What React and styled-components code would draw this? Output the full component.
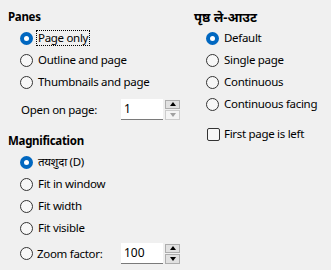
import React from 'react'
import styled, { createGlobalStyle } from 'styled-components'

const GlobalStyle = createGlobalStyle`
  body {
    margin: 0;
    background: #f0f0f0;
    font-family: "Noto Sans", "Noto Sans Devanagari", sans-serif;
    font-size: 11.5px;
    letter-spacing: -0.3px;
    color: #000;
  }
`

const Page = styled.div`
  display: grid;
  grid-template-columns: 186px 1fr;
  padding: 8px 0 0 8px;
  width: 331px;
  height: 270px;
  box-sizing: border-box;
`

const Column = styled.div`
  display: flex;
  flex-direction: column;
`

const Heading = styled.div`
  font-weight: bold;
  height: 18px;
  line-height: 18px;
  margin-bottom: 1px;
  margin-top: ${p => p.$top || 0}px;
  font-size: ${p => (p.$deva ? '13px' : 'inherit')};
  letter-spacing: ${p => (p.$deva ? '0' : 'inherit')};
`

const Row = styled.label`
  display: flex;
  align-items: center;
  height: 22px;
  padding-left: ${p => p.$indent || 12}px;
  margin-top: ${p => p.$top || 0}px;
  white-space: nowrap;
`

const Radio = styled.span`
  width: 13px;
  height: 13px;
  box-sizing: border-box;
  border-radius: 50%;
  flex-shrink: 0;
  margin-right: 4px;
  border: ${p => (p.$checked ? '0' : '1px solid #333')};
  background: ${p => (p.$checked ? '#0067c0' : '#f7f7f7')};
  display: flex;
  align-items: center;
  justify-content: center;
  &::after {
    content: '';
    display: ${p => (p.$checked ? 'block' : 'none')};
    width: 5px;
    height: 5px;
    border-radius: 50%;
    background: #fff;
  }
`

const Check = styled.span`
  width: 13px;
  height: 13px;
  box-sizing: border-box;
  border: 1px solid #333;
  border-radius: 2px;
  background: #f7f7f7;
  margin-left: 1px;
  margin-right: 3px;
  flex-shrink: 0;
`

const Text = styled.span`
  padding: 0 1px;
  line-height: 14px;
  border: 1px dotted ${p => (p.$focus ? '#000' : 'transparent')};
  margin-left: -1px;
`

const FieldLabel = styled.span`
  width: ${p => p.$width}px;
  flex-shrink: 0;
`

const Spin = styled.div`
  display: flex;
  align-items: stretch;
  height: 21px;
`

const SpinInput = styled.div`
  width: 42px;
  background: #fff;
  border-bottom: 1px solid #7a7a7a;
  box-sizing: border-box;
  padding-left: 3px;
  line-height: 20px;
  font-size: 12px;
  letter-spacing: 0;
`

const SpinButtons = styled.div`
  display: flex;
  flex-direction: column;
  gap: 1px;
  margin-left: 2px;
  width: 15px;
  padding-top: 1px;
`

const SpinButton = styled.div`
  flex: 1;
  border: 1px solid ${p => (p.$disabled ? '#cccccc' : '#adadad')};
  background: ${p => (p.$disabled ? '#f4f4f4' : '#e1e1e1')};
  display: flex;
  align-items: center;
  justify-content: center;
  &::after {
    content: '';
    width: 0;
    height: 0;
    border-left: 3.5px solid transparent;
    border-right: 3.5px solid transparent;
    ${p =>
      p.$down
        ? `border-top: 4px solid ${p.$disabled ? '#a0a0a0' : '#000'};`
        : `border-bottom: 4px solid ${p.$disabled ? '#a0a0a0' : '#000'};`}
  }
`

function SpinField ({ value, downDisabled }) {
  return (
    <Spin>
      <SpinInput>{value}</SpinInput>
      <SpinButtons>
        <SpinButton />
        <SpinButton $down $disabled={downDisabled} />
      </SpinButtons>
    </Spin>
  )
}

function RadioRow ({ label, checked, focus, top }) {
  return (
    <Row $top={top}>
      <Radio $checked={checked} />
      <Text $focus={focus}>{label}</Text>
    </Row>
  )
}

export default function App () {
  return (
    <>
      <GlobalStyle />
      <Page>
        <Column>
          <Heading>Panes</Heading>
          <RadioRow label='Page only' checked focus />
          <RadioRow label='Outline and page' />
          <RadioRow label='Thumbnails and page' />
          <Row $indent={13} $top={5}>
            <FieldLabel $width={100}>Open on page:</FieldLabel>
            <SpinField value='1' downDisabled />
          </Row>
          <Heading $top={12}>Magnification</Heading>
          <RadioRow label='तयशुदा (D)' checked />
          <RadioRow label='Fit in window' />
          <RadioRow label='Fit width' />
          <RadioRow label='Fit visible' />
          <Row $top={3}>
            <Radio />
            <FieldLabel $width={84}>Zoom factor:</FieldLabel>
            <SpinField value='100' />
          </Row>
        </Column>
        <Column>
          <Heading $deva>पृष्ठ ले-आउट</Heading>
          <RadioRow label='Default' checked />
          <RadioRow label='Single page' />
          <RadioRow label='Continuous' />
          <RadioRow label='Continuous facing' />
          <Row $top={8}>
            <Check />
            <Text>First page is left</Text>
          </Row>
        </Column>
      </Page>
    </>
  )
}
